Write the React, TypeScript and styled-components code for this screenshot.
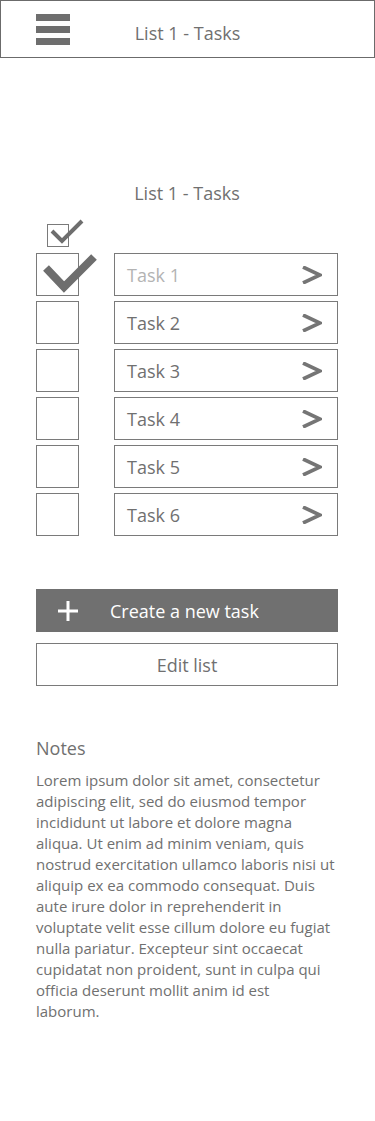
import styled, { createGlobalStyle } from "styled-components";

const GlobalStyle = createGlobalStyle`
  html, body {
    margin: 0;
    padding: 0;
    background: #ffffff;
  }
  body {
    font-family: "Open Sans", "Noto Sans", sans-serif;
    color: #707070;
  }
`;

const tasks = [
  { id: 1, name: "Task 1", done: true },
  { id: 2, name: "Task 2", done: false },
  { id: 3, name: "Task 3", done: false },
  { id: 4, name: "Task 4", done: false },
  { id: 5, name: "Task 5", done: false },
  { id: 6, name: "Task 6", done: false },
];

// lines broken as in the mockup
const notes = [
  "Lorem ipsum dolor sit amet, consectetur",
  "adipiscing elit, sed do eiusmod tempor",
  "incididunt ut labore et dolore magna",
  "aliqua. Ut enim ad minim veniam, quis",
  "nostrud exercitation ullamco laboris nisi ut",
  "aliquip ex ea commodo consequat. Duis",
  "aute irure dolor in reprehenderit in",
  "voluptate velit esse cillum dolore eu fugiat",
  "nulla pariatur. Excepteur sint occaecat",
  "cupidatat non proident, sunt in culpa qui",
  "officia deserunt mollit anim id est",
  "laborum.",
].join("\n");

export default function App() {
  return (
    <Page>
      <GlobalStyle />
      <Header>
        <Hamburger>
          <Bar />
          <Bar />
          <Bar />
        </Hamburger>
        <HeaderTitle>List 1 - Tasks</HeaderTitle>
      </Header>

      <Main>
        <Title>List 1 - Tasks</Title>

        <SelectAll>
          <CheckMark width="34" height="30" viewBox="0 0 34 30" style={{ left: 1, top: -6 }}>
            <polyline points="3,12 13,22 33,2" fill="none" stroke="#6e6e6e" strokeWidth="4" />
          </CheckMark>
        </SelectAll>

        <TaskList>
          {tasks.map((task) => (
            <TaskRow key={task.id}>
              <CheckBox>
                {task.done && (
                  <CheckMark width="60" height="40" viewBox="0 0 60 40" style={{ left: 6, top: 0 }}>
                    <polyline points="3,14 21,33 51,3" fill="none" stroke="#6e6e6e" strokeWidth="8" />
                  </CheckMark>
                )}
              </CheckBox>
              <TaskItem>
                <TaskName $done={task.done}>{task.name}</TaskName>
                <svg width="20" height="18" viewBox="0 0 20 18">
                  <polyline points="1,1 18,9 1,17" fill="none" stroke="#757575" strokeWidth="3.6" />
                </svg>
              </TaskItem>
            </TaskRow>
          ))}
        </TaskList>

        <Actions>
          <PrimaryButton>
            <svg width="20" height="20" viewBox="0 0 20 20">
              <path d="M10 0v20M0 10h20" stroke="#ffffff" strokeWidth="3" />
            </svg>
            <span>Create a new task</span>
          </PrimaryButton>
          <SecondaryButton>Edit list</SecondaryButton>
        </Actions>

        <Notes>
          <NotesTitle>Notes</NotesTitle>
          <NotesText>{notes}</NotesText>
        </Notes>
      </Main>
    </Page>
  );
}

const Page = styled.div`
  box-sizing: border-box;
  width: 375px;
  min-height: 1121px;
  background: #ffffff;
`;

const Header = styled.header`
  box-sizing: border-box;
  height: 58px;
  border: 1px solid #6b6b6b;
  display: grid;
  grid-template-columns: 1fr auto 1fr;
  align-items: center;
`;

const Hamburger = styled.div`
  display: flex;
  flex-direction: column;
  gap: 5px;
  width: 34px;
  margin-left: 35px;
  margin-top: 1px;
`;

const Bar = styled.span`
  display: block;
  height: 7px;
  background: #6e6e6e;
`;

const HeaderTitle = styled.div`
  font-size: 18px;
  color: #707070;
  margin-top: 7px;
`;

const Main = styled.main`
  box-sizing: border-box;
  padding: 0 37px 0 36px;
  display: flex;
  flex-direction: column;
`;

const Title = styled.h1`
  margin: 122px 0 0;
  font-size: 18px;
  font-weight: 400;
  color: #707070;
  text-align: center;
  line-height: 26px;
`;

const SelectAll = styled.div`
  box-sizing: border-box;
  position: relative;
  width: 22px;
  height: 23px;
  margin: 18px 0 0 11px;
  border: 1px solid #7a7a7a;
`;

const CheckMark = styled.svg`
  position: absolute;
  overflow: visible;
`;

const TaskList = styled.div`
  display: flex;
  flex-direction: column;
  gap: 5px;
  margin-top: 6px;
`;

const TaskRow = styled.div`
  display: flex;
  gap: 35px;
`;

const CheckBox = styled.div`
  box-sizing: border-box;
  position: relative;
  width: 43px;
  height: 43px;
  border: 1px solid #7a7a7a;
  flex-shrink: 0;
`;

const TaskItem = styled.div`
  box-sizing: border-box;
  flex: 1;
  height: 43px;
  border: 1px solid #7a7a7a;
  display: flex;
  align-items: center;
  justify-content: space-between;
  padding: 0 15px 0 12px;
`;

const TaskName = styled.span<{ $done: boolean }>`
  font-size: 18px;
  color: ${(props) => (props.$done ? "#b3b3b3" : "#707070")};
`;

const Actions = styled.div`
  display: flex;
  flex-direction: column;
  gap: 11px;
  margin-top: 53px;
`;

const PrimaryButton = styled.button`
  box-sizing: border-box;
  height: 43px;
  border: none;
  background: #707070;
  color: #ffffff;
  font-family: inherit;
  font-size: 18px;
  display: flex;
  align-items: center;
  gap: 32px;
  padding: 0 0 0 22px;
`;

const SecondaryButton = styled.button`
  box-sizing: border-box;
  height: 43px;
  border: 1px solid #7a7a7a;
  background: #ffffff;
  color: #707070;
  font-family: inherit;
  font-size: 18px;
  text-align: center;
`;

const Notes = styled.section`
  margin-top: 49px;
`;

const NotesTitle = styled.h2`
  margin: 0;
  font-size: 18px;
  font-weight: 400;
  line-height: 26px;
  color: #707070;
`;

const NotesText = styled.p`
  margin: 9px 0 0;
  font-size: 15px;
  line-height: 21px;
  white-space: pre-line;
  color: #707070;
`;
